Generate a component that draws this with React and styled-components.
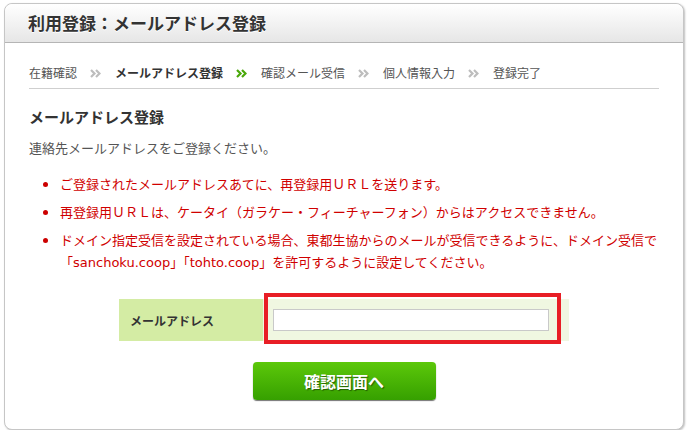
import styled, { createGlobalStyle } from "styled-components";

const GlobalStyle = createGlobalStyle`
  body {
    margin: 0;
    background: #fff;
    font-family: "Noto Sans CJK JP", "Noto Sans", sans-serif;
    color: #333;
  }
  * {
    box-sizing: border-box;
  }
`;

const steps = [
  { label: "在籍確認" },
  { label: "メールアドレス登録", current: true },
  { label: "確認メール受信" },
  { label: "個人情報入力" },
  { label: "登録完了" },
];

function Chevron({ green }) {
  const color = green ? "#4aa80a" : "#bdbdbd";
  return (
    <Arrow width="11" height="9" viewBox="0 0 11 9">
      <path d="M1 1 L4.5 4.5 L1 8" fill="none" stroke={color} strokeWidth="2.2" />
      <path d="M6 1 L9.5 4.5 L6 8" fill="none" stroke={color} strokeWidth="2.2" />
    </Arrow>
  );
}

export default function App() {
  return (
    <>
      <GlobalStyle />
      <Card>
        <Header>
          <Title>利用登録：メールアドレス登録</Title>
        </Header>
        <Body>
          <Steps>
            {steps.map((s, i) => (
              <Step key={s.label}>
                {i > 0 && <Chevron green={steps[i - 1].current} />}
                <StepLabel current={s.current}>{s.label}</StepLabel>
              </Step>
            ))}
          </Steps>
          <Heading>メールアドレス登録</Heading>
          <Lead>連絡先メールアドレスをご登録ください。</Lead>
          <Notes>
            <Note>ご登録されたメールアドレスあてに、再登録用ＵＲＬを送ります。</Note>
            <Note>再登録用ＵＲＬは、ケータイ（ガラケー・フィーチャーフォン）からはアクセスできません。</Note>
            <Note>
              <span>
                ドメイン指定受信を設定されている場合、東都生協からのメールが受信できるように、ドメイン受信で
                <br />
                「<Latin>sanchoku.coop</Latin>」「<Latin>tohto.coop</Latin>」を許可するように設定してください。
              </span>
            </Note>
          </Notes>
          <FormRow>
            <FieldLabel>メールアドレス</FieldLabel>
            <FieldCell>
              <Highlight />
              <Input type="email" />
            </FieldCell>
          </FormRow>
          <Actions>
            <SubmitButton>確認画面へ</SubmitButton>
          </Actions>
        </Body>
      </Card>
    </>
  );
}

const Card = styled.div`
  width: 680px;
  margin: 3px 0 0 4px;
  border: 1px solid #c6c6c6;
  border-radius: 8px;
  box-shadow: 1px 1px 2px rgba(0, 0, 0, 0.25);
  background: #fff;
`;

const Header = styled.div`
  height: 39px;
  padding-left: 23px;
  display: flex;
  align-items: center;
  border-bottom: 1px solid #b5b5b5;
  border-radius: 8px 8px 0 0;
  background: linear-gradient(#ffffff, #e6e6e6);
`;

const Title = styled.h1`
  margin: 0;
  font-size: 17px;
  font-weight: bold;
  line-height: 20px;
  color: #333;
  text-shadow: 0 1px 0 #fff;
`;

const Body = styled.div`
  padding: 20px 24px 29px;
`;

const Steps = styled.div`
  display: flex;
  align-items: center;
  gap: 13px;
  padding-bottom: 5px;
  border-bottom: 1px solid #cfcfcf;
`;

const Step = styled.div`
  display: flex;
  align-items: center;
  gap: 14px;
`;

const Arrow = styled.svg`
  display: block;
`;

const StepLabel = styled.span`
  font-size: 12px;
  line-height: 20px;
  color: ${(p) => (p.current ? "#333" : "#555")};
  font-weight: ${(p) => (p.current ? "bold" : "normal")};
`;

const Heading = styled.h2`
  margin: 17px 0 0;
  font-size: 15px;
  line-height: 22px;
  font-weight: bold;
  color: #333;
`;

const Lead = styled.p`
  margin: 10px 0 0;
  font-size: 13px;
  line-height: 20px;
  color: #555;
`;

const Notes = styled.ul`
  margin: 15px 0 0;
  padding: 0;
  list-style: none;
`;

const Note = styled.li`
  display: flex;
  padding-left: 14px;
  font-size: 13px;
  line-height: 22px;
  color: #d00000;
  & + & {
    margin-top: 6px;
  }
  &::before {
    content: "";
    flex: none;
    width: 5px;
    height: 5px;
    margin: 9px 12px 0 0;
    border-radius: 50%;
    background: #cc0000;
  }
`;

const Latin = styled.span`
  font-family: "DejaVu Sans", "Noto Sans CJK JP", sans-serif;
`;

const FormRow = styled.div`
  width: 450px;
  margin: 25px auto 0;
  display: flex;
  height: 42px;
`;

const FieldLabel = styled.div`
  width: 144px;
  padding-left: 11px;
  display: flex;
  align-items: center;
  background: #d4eca4;
  font-size: 12px;
  font-weight: bold;
  color: #333;
`;

const FieldCell = styled.div`
  position: relative;
  flex: 1;
  padding: 10px 0 0 10px;
  background: #f0f7e1;
`;

const Highlight = styled.div`
  position: absolute;
  left: 1px;
  top: -6px;
  width: 297px;
  height: 51px;
  border: 4px solid #e81e25;
  pointer-events: none;
`;

const Input = styled.input`
  display: block;
  width: 276px;
  height: 22px;
  margin: 0;
  border: 1px solid #c9c9c9;
  background: #fff;
  outline: none;
`;

const Actions = styled.div`
  display: flex;
  justify-content: center;
  margin-top: 21px;
`;

const SubmitButton = styled.button`
  width: 183px;
  height: 38px;
  border: none;
  border-radius: 4px;
  background: linear-gradient(#5cc80a, #36a000);
  box-shadow: 0 1px 1px rgba(0, 0, 0, 0.55);
  color: #fff;
  font-family: "Noto Sans CJK JP", sans-serif;
  font-size: 16px;
  font-weight: bold;
  text-shadow: 1px 1px 1px rgba(0, 0, 0, 0.45);
  cursor: pointer;
`;
